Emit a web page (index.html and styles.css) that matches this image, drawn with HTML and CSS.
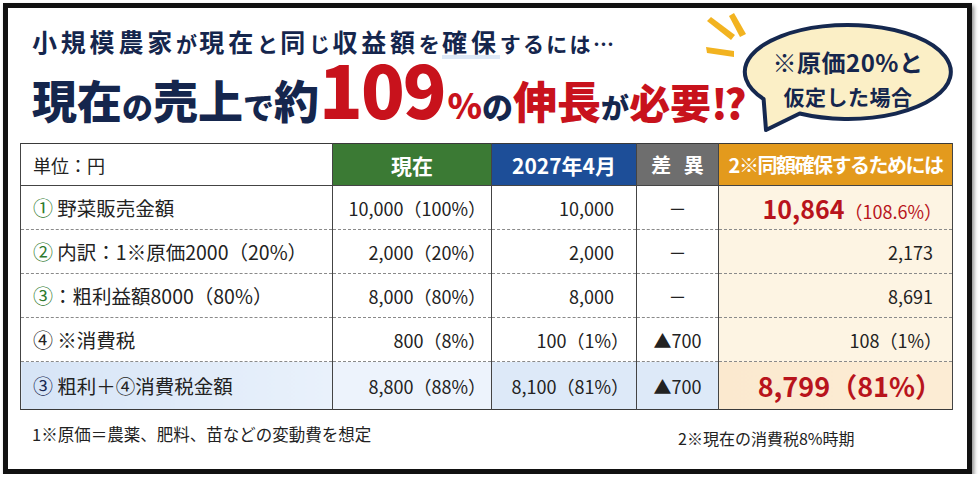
FILE: index.html
```html
<!DOCTYPE html>
<html lang="ja">
<head>
<meta charset="utf-8">
<title>収益額確保</title>
<link rel="stylesheet" href="styles.css">
</head>
<body>
<div class="frame">
  <header class="head">
    <p class="lead"><span class="k">小規模農家</span><span class="s">が</span><span class="k">現在</span><span class="s">と</span><span class="k">同</span><span class="s">じ</span><span class="k">収益額</span><span class="s">を</span><span class="k mark">確保</span><span class="s">するには…</span></p>
    <p class="big"><span class="nv">現在</span><span class="nvs">の</span><span class="nv">売上</span><span class="nvs">で</span><span class="nv">約</span><span class="num">109</span><span class="pct">%</span><span class="nvs">の</span><span class="rk">伸長</span><span class="nvs2">が</span><span class="rk2">必要</span><span class="ex">!?</span></p>
  </header>

  <div class="bubble">
    <svg class="bubble-svg" width="260" height="125" viewBox="0 0 260 125">
      <g fill="#f2b320">
        <polygon points="7,11 11,7 35,25 31,30"/>
        <polygon points="29,6 34,3 46,24 40,27"/>
        <polygon points="6,37 7,43 34,47 34,41"/>
      </g>
      <path d="M99.7 103.5 A103 47 0 1 0 63.6 89 L66 120 Z" fill="#fbefc6" stroke="#15284f" stroke-width="4" stroke-linejoin="round"/>
    </svg>
    <div class="bubble-text"><span class="b1">※原価20%と</span><span class="b2">仮定した場合</span></div>
  </div>

  <table class="tbl">
    <colgroup><col class="c1"><col class="c2"><col class="c3"><col class="c4"><col class="c5"></colgroup>
    <thead>
      <tr>
        <th class="unit">単位：円</th>
        <th class="h-now">現在</th>
        <th class="h-2027">2027年4月</th>
        <th class="h-diff">差 異</th>
        <th class="h-need">2※同額確保するためには</th>
      </tr>
    </thead>
    <tbody>
      <tr class="row">
        <td class="lbl"><span class="cg">①</span> 野菜販売金額</td>
        <td class="val v2">10,000（100%）</td>
        <td class="val v3 plain">10,000</td>
        <td class="mid">－</td>
        <td class="need"><span class="hl">10,864</span><span class="red">（108.6%）</span></td>
      </tr>
      <tr class="row">
        <td class="lbl"><span class="cg">②</span> 内訳：1※原価2000（20%）</td>
        <td class="val v2">2,000（20%）</td>
        <td class="val v3 plain">2,000</td>
        <td class="mid">－</td>
        <td class="need plain">2,173</td>
      </tr>
      <tr class="row">
        <td class="lbl"><span class="cg">③</span>：粗利益額8000（80%）</td>
        <td class="val v2">8,000（80%）</td>
        <td class="val v3 plain">8,000</td>
        <td class="mid">－</td>
        <td class="need plain">8,691</td>
      </tr>
      <tr class="row">
        <td class="lbl"><span class="cd">④</span> ※消費税</td>
        <td class="val v2">800（8%）</td>
        <td class="val v3">100（1%）</td>
        <td class="mid">▲700</td>
        <td class="need">108<span class="tight">（1%）</span></td>
      </tr>
      <tr class="row total">
        <td class="lbl"><span class="cn">③</span> 粗利＋④消費税金額</td>
        <td class="val v2">8,800（88%）</td>
        <td class="val v3">8,100（81%）</td>
        <td class="mid">▲700</td>
        <td class="need"><span class="hl2">8,799（81%）</span></td>
      </tr>
    </tbody>
  </table>

  <div class="notes">
    <p class="note">1※原価＝農薬、肥料、苗などの変動費を想定</p>
    <p class="note note2">2※現在の消費税8%時期</p>
  </div>
</div>
</body>
</html>
```

FILE: styles.css
```css
* { box-sizing: border-box; }
html, body { margin: 0; padding: 0; background: #ffffff; }
body {
  font-family: "Noto Sans CJK JP", "Noto Sans", sans-serif;
  color: #222;
}
.frame {
  position: relative;
  margin: 3px 0 0 3px;
  width: 969px;
  height: 471px;
  border: 5px solid #111;
  background: #fff;
  box-shadow: 2px 3px 4px rgba(0,0,0,0.45);
}
.head { padding-left: 24px; }
.lead {
  margin: 18px 0 0 0;
  height: 30px;
  line-height: 30px;
  color: #15264d;
  font-weight: 700;
  white-space: nowrap;
}
.lead .k { font-size: 25px; letter-spacing: 3.8px; }
.lead .s { font-size: 21px; letter-spacing: 2.3px; }
.lead .mark { background: linear-gradient(transparent 88%, #dce8f7 88%); }
.big {
  margin: -4px 0 0 0;
  line-height: 1;
  font-size: 45px;
  font-weight: 900;
  color: #15264d;
  white-space: nowrap;
}
.big span { line-height: 1; }
.big .nv { font-size: 45px; }
.big .nvs { font-size: 31px; }
.big .nvs2 { font-size: 28px; }
.big .num { font-size: 72px; color: #c8121c; letter-spacing: -2px; }
.big .pct { font-size: 35px; color: #c8121c; margin-left: 3px; }
.big .rk { font-size: 44px; color: #c8121c; }
.big .rk2 { font-size: 41px; color: #c8121c; }
.big .ex { font-size: 41px; color: #c8121c; letter-spacing: -3px; }

.bubble {
  position: absolute;
  left: 692px;
  top: 2px;
  width: 260px;
  height: 125px;
}
.bubble-svg { position: absolute; left: 0; top: 0; }
.bubble-text {
  position: absolute;
  left: 45px;
  top: 35px;
  width: 206px;
  display: flex;
  flex-direction: column;
  align-items: center;
  color: #15264d;
  font-weight: 700;
  line-height: 34px;
  white-space: nowrap;
}
.bubble-text .b1 { font-size: 24px; letter-spacing: 0.5px; }
.bubble-text .b2 { font-size: 21px; letter-spacing: 0.5px; }

.tbl {
  margin: 19px 0 0 12px;
  width: 932px;
  table-layout: fixed;
  border-collapse: collapse;
  border: 1.5px solid #3a3a3a;
  font-size: 19px;
}
.c1 { width: 312px; }
.c2 { width: 159px; }
.c3 { width: 145px; }
.c4 { width: 82px; }
.c5 { width: 234px; }
.tbl th, .tbl td {
  border-left: 1px solid #444;
  border-right: 1px solid #444;
  padding: 0;
  white-space: nowrap;
}
.tbl thead tr { height: 42px; }
.tbl th {
  color: #fff;
  font-weight: 700;
  font-size: 21px;
  text-align: center;
  border-bottom: 1px solid #444;
}
.tbl th.unit {
  background: #fff;
  color: #222;
  font-weight: 400;
  font-size: 18px;
  text-align: left;
  padding-left: 12px;
}
.h-now { background: #3b7a34; }
.h-2027 { background: #1d4e98; }
.h-diff { background: #6e6e6e; font-size: 20px !important; letter-spacing: 4px; text-indent: 4px; }
.h-need { background: #e39a1d; font-size: 20px !important; letter-spacing: -1.5px; }
.tbl tbody tr { height: 44px; }
.tbl tbody tr.row + tr.row td { border-top: 1px dashed #8a8a8a; }
.tbl tbody tr.total { height: 48px; }
.tbl tbody tr.total td { border-top: 1px solid #444; background: #dde9f8; }
.tbl tbody tr.total td.lbl { background: linear-gradient(90deg, #d6e4f6, #e9f1fb); }
.tbl tbody tr.total td.v2 { background: #edf3fc; }
.tbl tbody tr.total td.need { background: linear-gradient(90deg, #fbe9cf, #fcecd4); }
.lbl { padding-left: 12px !important; color: #222; font-size: 19.5px; }
.cg { color: #2f7a2f; font-size: 20px; }
.cd { color: #222; font-size: 20px; }
.cn { color: #1a2a55; font-size: 20px; }
.val { text-align: right; font-size: 18px; }
.v2 { padding-right: 5px !important; }
.v3 { padding-right: 7px !important; }
.v3.plain { padding-right: 22px !important; }
.mid { text-align: center; font-size: 18px; }
.need {
  background: #fdf4e3;
  text-align: right;
  font-size: 18px;
  padding-right: 10px !important;
}
.need.plain { padding-right: 19px !important; }
.tight { font-size: 18px; }
.hl { color: #b8141c; font-weight: 700; font-size: 25px; }
.red { color: #b8141c; font-size: 18px; }
.hl2 { color: #b8141c; font-weight: 700; font-size: 27px; }

.notes {
  display: grid;
  grid-template-columns: 646px auto;
  padding-left: 24px;
  margin-top: 12px;
}
.note {
  margin: 0;
  font-size: 16.5px;
  line-height: 24px;
  color: #222;
}
.note2 { padding-top: 4px; font-size: 16px; }
```
